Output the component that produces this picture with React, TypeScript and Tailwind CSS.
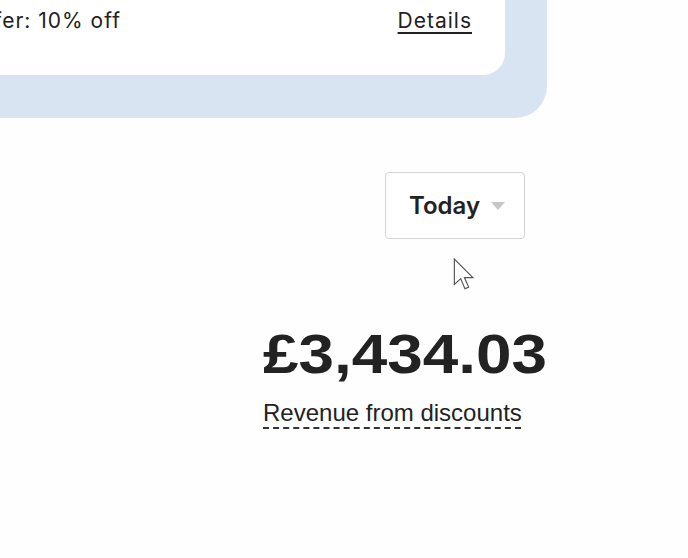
import React from "react";

const UI_FONT = { fontFamily: "Inter, 'Noto Sans', sans-serif" };
const NUM_FONT = { fontFamily: "'Liberation Sans', Arial, sans-serif" };

function Cursor() {
  return (
    <svg
      aria-hidden="true"
      className="pointer-events-none absolute left-[453px] top-[258px]"
      width="26"
      height="36"
      viewBox="0 0 24 34"
    >
      <path
        d="M1 1 L1 25 L7 19.5 L11 29 L14.5 27.5 L10.5 18.5 L18.5 18.5 Z"
        fill="#fff"
        stroke="#555"
        strokeWidth="1.1"
        strokeLinejoin="miter"
      />
    </svg>
  );
}

function OfferPanel() {
  return (
    <div className="w-[547px] rounded-br-[32px] bg-[#d9e4f2] pb-[43px] pr-[42px]">
      <div
        className="flex h-[75px] items-start justify-between rounded-br-[22px] bg-white pr-[33px] pt-[7px] text-[21px] leading-[28px] tracking-[1px] text-[#222]"
        style={UI_FONT}
      >
        <span className="ml-[-31px] whitespace-nowrap">Offer: 10% off</span>
        <a href="#" className="underline underline-offset-[4px]">
          Details
        </a>
      </div>
    </div>
  );
}

function RangePicker() {
  return (
    <button
      type="button"
      className="ml-[385px] mt-[54px] flex h-[67px] w-[140px] items-center gap-[11px] rounded-[4px] border border-[#d4d4d4] bg-white pl-[23px]"
    >
      <span className="text-[24px] font-semibold text-[#222]" style={UI_FONT}>
        Today
      </span>
      <svg width="14" height="8" viewBox="0 0 14 8" aria-hidden="true">
        <path d="M0 0 H14 L7 8 Z" fill="#c6c6c6" />
      </svg>
    </button>
  );
}

function DiscountRevenue() {
  return (
    <div className="ml-[263px] mt-[87px] flex flex-col items-start" style={NUM_FONT}>
      <div className="origin-left scale-x-[1.14] text-[56px] font-bold leading-[56px] text-[#222]">
        £3,434.03
      </div>
      <div className="mt-[17px] text-[24px] leading-[28px] text-[#222] underline decoration-dashed decoration-[#333] decoration-[1.5px] underline-offset-[6px]">
        Revenue from discounts
      </div>
    </div>
  );
}

export default function App() {
  return (
    <div className="relative h-[558px] w-[688px] overflow-hidden bg-[#fefefe]">
      <OfferPanel />
      <RangePicker />
      <DiscountRevenue />
      <Cursor />
    </div>
  );
}
